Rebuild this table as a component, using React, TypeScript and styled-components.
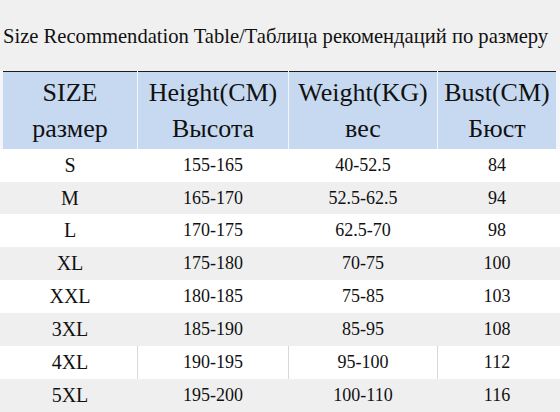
import React from "react";
import styled, { createGlobalStyle } from "styled-components";

const Global = createGlobalStyle`
  html, body { margin: 0; padding: 0; background: #f0f0f0; }
  body { font-family: "Liberation Serif", "Times New Roman", serif; color: #111; }
`;

const Page = styled.div`
  width: 560px;
  height: 412px;
  overflow: hidden;
  background: #f0f0f0;
  display: flex;
  flex-direction: column;
`;

const Title = styled.div`
  height: 71px;
  display: flex;
  align-items: center;
  padding: 3px 0 0 3px;
  box-sizing: border-box;
  font-size: 20.6px;
  white-space: nowrap;
  background: #f0f0f0;
`;

const cols = "134px 150px 148px 118px";

const HeaderRow = styled.div`
  display: grid;
  grid-template-columns: ${cols};
  column-gap: 1px;
  padding: 0 4px 0 3px;
  background: #f4f6f9;
  height: 78px;
`;

const HeadCell = styled.div`
  background: #c6d9f0;
  border-top: 1px solid #1c1c1c;
  padding-top: 3px;
  box-sizing: border-box;
  display: flex;
  flex-direction: column;
  align-items: center;
  font-size: 26px;
  line-height: 36px;
  white-space: nowrap;
`;

const Row = styled.div<{ $shade: boolean; $ruled?: boolean }>`
  display: grid;
  grid-template-columns: ${cols};
  column-gap: 1px;
  padding: 0 4px 0 3px;
  height: 33px;
  background: ${(p) => (p.$shade ? "#efefef" : "#ffffff")};
  & > div + div {
    border-left: 1px solid ${(p) => (p.$ruled ? "#d8d8d8" : "transparent")};
    margin-left: -1px;
  }
`;

const Cell = styled.div<{ $big?: boolean }>`
  display: flex;
  align-items: center;
  justify-content: center;
  font-size: ${(p) => (p.$big ? "20px" : "18px")};
  white-space: nowrap;
`;

const headers: [string, string][] = [
  ["SIZE", "размер"],
  ["Height(CM)", "Высота"],
  ["Weight(KG)", "вес"],
  ["Bust(CM)", "Бюст"],
];

const rows: [string, string, string, string][] = [
  ["S", "155-165", "40-52.5", "84"],
  ["M", "165-170", "52.5-62.5", "94"],
  ["L", "170-175", "62.5-70", "98"],
  ["XL", "175-180", "70-75", "100"],
  ["XXL", "180-185", "75-85", "103"],
  ["3XL", "185-190", "85-95", "108"],
  ["4XL", "190-195", "95-100", "112"],
  ["5XL", "195-200", "100-110", "116"],
];

export default function App() {
  return (
    <Page>
      <Global />
      <Title>Size Recommendation Table/Таблица рекомендаций по размеру</Title>
      <HeaderRow>
        {headers.map(([en, ru]) => (
          <HeadCell key={en}>
            <span>{en}</span>
            <span>{ru}</span>
          </HeadCell>
        ))}
      </HeaderRow>
      {rows.map((r, i) => (
        <Row key={r[0]} $shade={i % 2 === 1} $ruled={r[0] === "4XL"}>
          <Cell $big>{r[0]}</Cell>
          <Cell>{r[1]}</Cell>
          <Cell>{r[2]}</Cell>
          <Cell>{r[3]}</Cell>
        </Row>
      ))}
    </Page>
  );
}
